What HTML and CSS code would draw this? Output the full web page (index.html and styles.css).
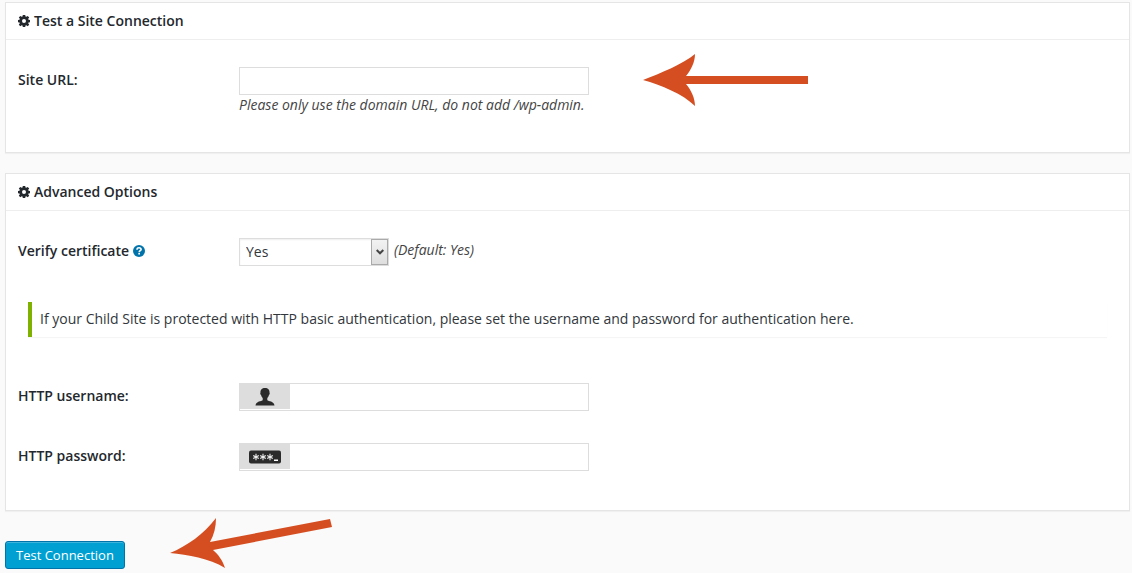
FILE: index.html
```html
<!DOCTYPE html>
<html lang="en">
<head>
    <meta charset="UTF-8">
    <meta name="viewport" content="width=device-width, initial-scale=1.0">
    <title>Test Connection</title>
    <link rel="stylesheet" href="styles.css">
</head>
<body>
    <!-- Shared icons -->
    <svg class="icon-defs" width="0" height="0" aria-hidden="true">
        <symbol id="icon-gear" viewBox="0 0 12 12">
            <path fill-rule="evenodd" d="M4.800 0h2.400l.3 1.500.8.300L9.700.900l1.500 1.500-1 1.400.3.900 1.500.2v2.300l-1.500.2-.3.900 1 1.400-1.500 1.500-1.400-1-.8.400L7.200 12H4.800l-.3-1.400-.8-.4-1.400 1L.8 9.700l1-1.400-.3-.9L0 7.200V4.900l1.500-.2.3-.9-1-1.400L2.300.900l1.400.9.8-.3zM6 4a2 2 0 1 0 0 4 2 2 0 0 0 0-4z"/>
        </symbol>
        <symbol id="icon-arrow" viewBox="0 0 166 52">
            <path d="M0 26C18 19 40 10 52 0C52 8 48 16 43 22H165V30H43C48 36 52 44 52 52C40 40 18 31 0 26z"/>
        </symbol>
    </svg>

    <form class="connection-form">
        <section class="panel">
            <h3 class="panel-title"><svg class="gear"><use href="#icon-gear"/></svg>Test a Site Connection</h3>
            <div class="panel-body">
                <div class="row">
                    <label class="row-label" for="site-url">Site URL:</label>
                    <div class="row-field">
                        <input class="text-input" type="text" id="site-url">
                        <em class="hint">Please only use the domain URL, do not add /wp-admin.</em>
                    </div>
                    <svg class="arrow arrow-url" aria-hidden="true"><use href="#icon-arrow"/></svg>
                </div>
            </div>
        </section>

        <section class="panel">
            <h3 class="panel-title"><svg class="gear"><use href="#icon-gear"/></svg>Advanced Options</h3>
            <div class="panel-body">
                <div class="row">
                    <label class="row-label" for="verify">Verify certificate
                        <svg class="help" viewBox="0 0 12 12" aria-hidden="true">
                            <circle cx="6" cy="6" r="6" fill="#0073aa"/>
                            <path d="M4 4.700C4 3.300 4.900 2.700 6 2.700s2.100.7 2.100 1.700C8.100 5.700 6.200 5.700 6.200 7.200" fill="none" stroke="#fff" stroke-width="1.600"/>
                            <path d="M5.300 8h1.700v1.600H5.300z" fill="#fff"/>
                        </svg>
                    </label>
                    <div class="row-field inline">
                        <span class="select-box">
                            <select id="verify">
                                <option>Yes</option>
                                <option>No</option>
                            </select>
                            <span class="select-arrow">
                                <svg viewBox="0 0 8 6" aria-hidden="true"><path d="M.7 1L4 4.300 7.300 1" fill="none" stroke="#444" stroke-width="2"/></svg>
                            </span>
                        </span>
                        <em class="default-note">(Default: Yes)</em>
                    </div>
                </div>

                <div class="notice">If your Child Site is protected with HTTP basic authentication, please set the username and password for authentication here.</div>

                <div class="row">
                    <label class="row-label" for="http-user">HTTP username:</label>
                    <div class="row-field icon-field">
                        <span class="field-icon">
                            <svg width="20" height="20" viewBox="0 0 20 20" aria-hidden="true">
                                <path d="M10 1C7 1 5.200 2.800 5.500 5.500C5 5.800 5.300 7.500 6 7.900C6.300 9.200 7 10.300 7.700 11V13.200C6.500 14.300 1 14 .5 18.500H19.500C19 14 13.500 14.300 12.300 13.200V11C13 10.300 13.700 9.200 14 7.900C14.700 7.500 15 5.800 14.500 5.500C14.800 2.800 13 1 10 1z" fill="#2b2b2b"/>
                            </svg>
                        </span>
                        <input type="text" id="http-user">
                    </div>
                </div>
                <div class="row">
                    <label class="row-label" for="http-pass">HTTP password:</label>
                    <div class="row-field icon-field">
                        <span class="field-icon">
                            <svg width="32" height="14" viewBox="0 0 32 14" aria-hidden="true">
                                <rect y=".5" width="32" height="13" rx="2" fill="#2b2b2b"/>
                                <g stroke="#eee" stroke-width="1.100">
                                    <path d="M7 3.800v6.400M4.200 5.400l5.600 3.200M4.200 8.600l5.600-3.200"/>
                                    <path d="M14 3.800v6.400M11.200 5.400l5.600 3.200M11.200 8.600l5.600-3.200"/>
                                    <path d="M21 3.800v6.400M18.200 5.400l5.600 3.200M18.200 8.600l5.600-3.200"/>
                                </g>
                                <path d="M25 9.500h4V11h-4z" fill="#fff"/>
                            </svg>
                        </span>
                        <input type="password" id="http-pass">
                    </div>
                </div>
            </div>
        </section>

        <div class="actions">
            <button type="button" class="button-primary">Test Connection</button>
            <svg class="arrow arrow-button" viewBox="0 0 163 52" aria-hidden="true">
                <path d="M0 35C17 28 34 16 46 0C46 9 44 17 40 24L160 1L162 9L43 32C48 36 53 43 55 50C39 40 18 37 0 35z"/>
            </svg>
        </div>
    </form>
</body>
</html>
```

FILE: styles.css
```css
/* General */
* {
    box-sizing: border-box;
}

body {
    margin: 0;
    padding: 2px 2px 0 5px;
    background: #fafafa;
    color: #444;
    font-family: "Open Sans", sans-serif;
    font-size: 14px;
    line-height: 20px;
}

.icon-defs {
    position: absolute;
}

/* Panels */
.panel {
    margin-bottom: 20px;
    background: #fff;
    border: 1px solid #e5e5e5;
    box-shadow: 0 1px 1px rgba(0, 0, 0, 0.04);
}

.panel-title {
    display: flex;
    align-items: center;
    gap: 4px;
    margin: 0;
    padding: 8px 12px;
    border-bottom: 1px solid #eee;
    color: #23282d;
    font-size: 14px;
    font-weight: 600;
}

.gear {
    width: 12px;
    height: 12px;
    fill: #23282d;
}

.panel-body {
    padding: 27px 12px 39px;
}

/* Form rows */
.row {
    position: relative;
    display: flex;
    align-items: flex-start;
}

.row + .row {
    margin-top: 32px;
}

.row-label {
    width: 221px;
    padding-top: 3px;
    color: #23282d;
    font-weight: 600;
}

.help {
    width: 12px;
    height: 12px;
    vertical-align: -1px;
}

.row-field {
    width: 350px;
}

input,
select {
    height: 28px;
    margin: 0;
    padding: 2px 6px;
    background: #fff;
    border: 1px solid #ddd;
    border-radius: 0;
    color: #32373c;
    font-family: inherit;
    font-size: 14px;
}

.text-input {
    display: block;
    width: 100%;
}

.hint {
    display: block;
    padding-top: 1px;
    line-height: 17px;
}

.inline {
    display: flex;
    gap: 5px;
}

.default-note {
    padding-top: 2px;
}

/* Drop-down */
.select-box {
    position: relative;
    width: 150px;
}

select {
    display: block;
    width: 100%;
    padding: 1px 6px 3px;
    appearance: none;
    box-shadow: inset 0 1px 2px rgba(0, 0, 0, 0.07);
}

.select-arrow {
    position: absolute;
    top: 1px;
    right: 1px;
    bottom: 1px;
    display: flex;
    align-items: center;
    justify-content: center;
    width: 17px;
    background: linear-gradient(#f2f2f2, #dedede);
    border: 1px solid #aaa;
    pointer-events: none;
}

.select-arrow svg {
    width: 8px;
    height: 6px;
}

/* Notice */
.notice {
    margin: 36px 10px 46px;
    padding: 7px 8px 8px;
    border-left: 4px solid #7fb100;
    box-shadow: 0 1px 1px rgba(0, 0, 0, 0.04);
    color: #32373c;
}

/* Inputs with an icon */
.icon-field {
    display: flex;
    height: 28px;
    border: 1px solid #ddd;
}

.icon-field input {
    flex: 1;
    min-width: 0;
    height: 100%;
    border: none;
}

.field-icon {
    display: flex;
    align-items: center;
    justify-content: center;
    width: 50px;
    margin-bottom: 1px;
    background: #ddd;
}

/* Submit */
.actions {
    position: relative;
    margin-top: 30px;
}

.button-primary {
    height: 28px;
    padding: 0 10px;
    background: #00a0d2;
    border: 1px solid #0073aa;
    border-radius: 3px;
    box-shadow: inset 0 1px 0 rgba(120, 200, 230, 0.5);
    color: #fff;
    font-family: inherit;
    font-size: 13px;
    cursor: pointer;
}

/* Callout arrows */
.arrow {
    position: absolute;
    fill: #d54e21;
}

.arrow-url {
    top: -13px;
    left: 625px;
    width: 166px;
    height: 52px;
}

.arrow-button {
    top: -23px;
    left: 165px;
    width: 163px;
    height: 52px;
}
```
